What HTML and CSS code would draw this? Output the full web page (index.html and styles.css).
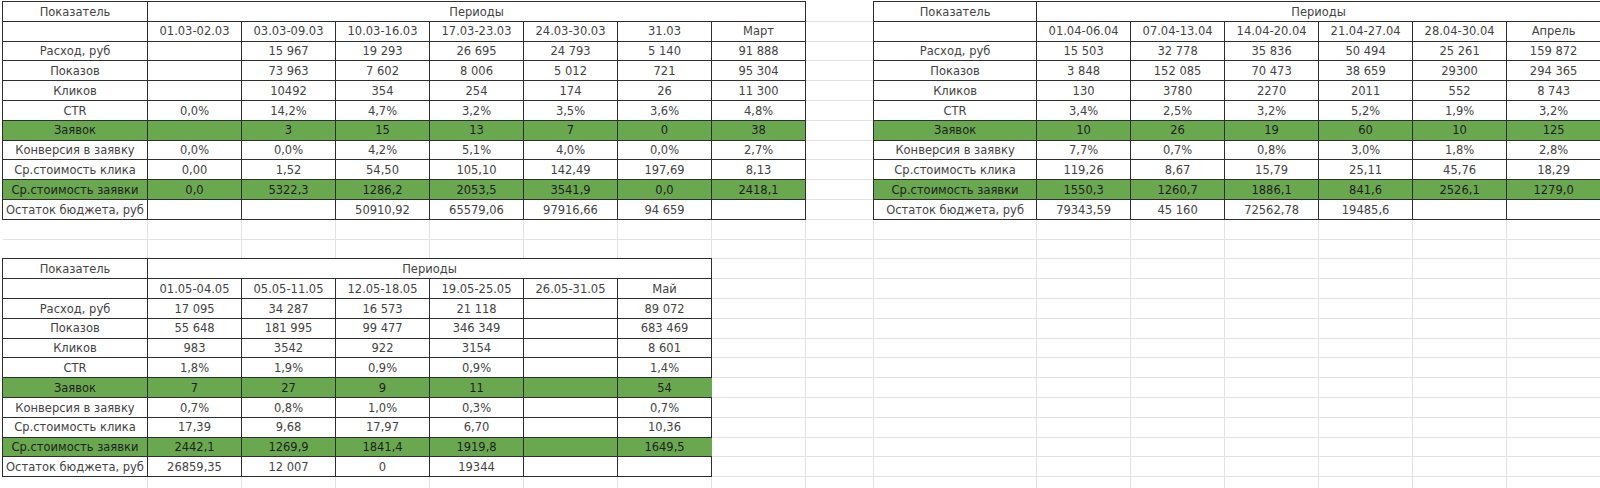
FILE: index.html
```html
<!DOCTYPE html>
<html lang="ru">
<head>
<meta charset="utf-8">
<title>Отчёт по периодам</title>
<link rel="stylesheet" href="styles.css">
</head>
<body>
<table class="sheet">
<colgroup>
<col class="wa"><col class="wd"><col class="wd"><col class="wd"><col class="wd"><col class="wd"><col class="wd"><col class="wd">
<col class="wi">
<col class="wj"><col class="wd"><col class="wd"><col class="wd"><col class="wd"><col class="wd"><col class="wd">
</colgroup>
<tbody>
<tr>
<td class="t">Показатель</td><td class="t" colspan="7">Периоды</td>
<td></td>
<td class="t">Показатель</td><td class="t" colspan="6">Периоды</td>
</tr>
<tr>
<td class="t"></td><td class="t">01.03-02.03</td><td class="t">03.03-09.03</td><td class="t">10.03-16.03</td><td class="t">17.03-23.03</td><td class="t">24.03-30.03</td><td class="t">31.03</td><td class="t">Март</td>
<td></td>
<td class="t"></td><td class="t">01.04-06.04</td><td class="t">07.04-13.04</td><td class="t">14.04-20.04</td><td class="t">21.04-27.04</td><td class="t">28.04-30.04</td><td class="t">Апрель</td>
</tr>
<tr>
<td class="t">Расход, руб</td><td class="t"></td><td class="t">15 967</td><td class="t">19 293</td><td class="t">26 695</td><td class="t">24 793</td><td class="t">5 140</td><td class="t">91 888</td>
<td></td>
<td class="t">Расход, руб</td><td class="t">15 503</td><td class="t">32 778</td><td class="t">35 836</td><td class="t">50 494</td><td class="t">25 261</td><td class="t">159 872</td>
</tr>
<tr>
<td class="t">Показов</td><td class="t"></td><td class="t">73 963</td><td class="t">7 602</td><td class="t">8 006</td><td class="t">5 012</td><td class="t">721</td><td class="t">95 304</td>
<td></td>
<td class="t">Показов</td><td class="t">3 848</td><td class="t">152 085</td><td class="t">70 473</td><td class="t">38 659</td><td class="t">29300</td><td class="t">294 365</td>
</tr>
<tr>
<td class="t">Кликов</td><td class="t"></td><td class="t">10492</td><td class="t">354</td><td class="t">254</td><td class="t">174</td><td class="t">26</td><td class="t">11 300</td>
<td></td>
<td class="t">Кликов</td><td class="t">130</td><td class="t">3780</td><td class="t">2270</td><td class="t">2011</td><td class="t">552</td><td class="t">8 743</td>
</tr>
<tr>
<td class="t">CTR</td><td class="t">0,0%</td><td class="t">14,2%</td><td class="t">4,7%</td><td class="t">3,2%</td><td class="t">3,5%</td><td class="t">3,6%</td><td class="t">4,8%</td>
<td></td>
<td class="t">CTR</td><td class="t">3,4%</td><td class="t">2,5%</td><td class="t">3,2%</td><td class="t">5,2%</td><td class="t">1,9%</td><td class="t">3,2%</td>
</tr>
<tr>
<td class="t g">Заявок</td><td class="t g"></td><td class="t g">3</td><td class="t g">15</td><td class="t g">13</td><td class="t g">7</td><td class="t g">0</td><td class="t g">38</td>
<td></td>
<td class="t g">Заявок</td><td class="t g">10</td><td class="t g">26</td><td class="t g">19</td><td class="t g">60</td><td class="t g">10</td><td class="t g">125</td>
</tr>
<tr>
<td class="t">Конверсия в заявку</td><td class="t">0,0%</td><td class="t">0,0%</td><td class="t">4,2%</td><td class="t">5,1%</td><td class="t">4,0%</td><td class="t">0,0%</td><td class="t">2,7%</td>
<td></td>
<td class="t">Конверсия в заявку</td><td class="t">7,7%</td><td class="t">0,7%</td><td class="t">0,8%</td><td class="t">3,0%</td><td class="t">1,8%</td><td class="t">2,8%</td>
</tr>
<tr>
<td class="t">Ср.стоимость клика</td><td class="t">0,00</td><td class="t">1,52</td><td class="t">54,50</td><td class="t">105,10</td><td class="t">142,49</td><td class="t">197,69</td><td class="t">8,13</td>
<td></td>
<td class="t">Ср.стоимость клика</td><td class="t">119,26</td><td class="t">8,67</td><td class="t">15,79</td><td class="t">25,11</td><td class="t">45,76</td><td class="t">18,29</td>
</tr>
<tr>
<td class="t g">Ср.стоимость заявки</td><td class="t g">0,0</td><td class="t g">5322,3</td><td class="t g">1286,2</td><td class="t g">2053,5</td><td class="t g">3541,9</td><td class="t g">0,0</td><td class="t g">2418,1</td>
<td></td>
<td class="t g">Ср.стоимость заявки</td><td class="t g">1550,3</td><td class="t g">1260,7</td><td class="t g">1886,1</td><td class="t g">841,6</td><td class="t g">2526,1</td><td class="t g">1279,0</td>
</tr>
<tr>
<td class="t">Остаток бюджета, руб</td><td class="t"></td><td class="t"></td><td class="t">50910,92</td><td class="t">65579,06</td><td class="t">97916,66</td><td class="t">94 659</td><td class="t"></td>
<td></td>
<td class="t">Остаток бюджета, руб</td><td class="t">79343,59</td><td class="t">45 160</td><td class="t">72562,78</td><td class="t">19485,6</td><td class="t"></td><td class="t"></td>
</tr>
<tr>
<td></td><td></td><td></td><td></td><td></td><td></td><td></td><td></td><td></td><td></td><td></td><td></td><td></td><td></td><td></td><td></td>
</tr>
<tr>
<td></td><td></td><td></td><td></td><td></td><td></td><td></td><td></td><td></td><td></td><td></td><td></td><td></td><td></td><td></td><td></td>
</tr>
<tr>
<td class="t">Показатель</td><td class="t" colspan="6">Периоды</td>
<td></td><td></td><td></td><td></td><td></td><td></td><td></td><td></td><td></td>
</tr>
<tr>
<td class="t"></td><td class="t">01.05-04.05</td><td class="t">05.05-11.05</td><td class="t">12.05-18.05</td><td class="t">19.05-25.05</td><td class="t">26.05-31.05</td><td class="t">Май</td>
<td></td><td></td><td></td><td></td><td></td><td></td><td></td><td></td><td></td>
</tr>
<tr>
<td class="t">Расход, руб</td><td class="t">17 095</td><td class="t">34 287</td><td class="t">16 573</td><td class="t">21 118</td><td class="t"></td><td class="t">89 072</td>
<td></td><td></td><td></td><td></td><td></td><td></td><td></td><td></td><td></td>
</tr>
<tr>
<td class="t">Показов</td><td class="t">55 648</td><td class="t">181 995</td><td class="t">99 477</td><td class="t">346 349</td><td class="t"></td><td class="t">683 469</td>
<td></td><td></td><td></td><td></td><td></td><td></td><td></td><td></td><td></td>
</tr>
<tr>
<td class="t">Кликов</td><td class="t">983</td><td class="t">3542</td><td class="t">922</td><td class="t">3154</td><td class="t"></td><td class="t">8 601</td>
<td></td><td></td><td></td><td></td><td></td><td></td><td></td><td></td><td></td>
</tr>
<tr>
<td class="t">CTR</td><td class="t">1,8%</td><td class="t">1,9%</td><td class="t">0,9%</td><td class="t">0,9%</td><td class="t"></td><td class="t">1,4%</td>
<td></td><td></td><td></td><td></td><td></td><td></td><td></td><td></td><td></td>
</tr>
<tr>
<td class="t g">Заявок</td><td class="t g">7</td><td class="t g">27</td><td class="t g">9</td><td class="t g">11</td><td class="t g"></td><td class="t g ge">54</td>
<td></td><td></td><td></td><td></td><td></td><td></td><td></td><td></td><td></td>
</tr>
<tr>
<td class="t">Конверсия в заявку</td><td class="t">0,7%</td><td class="t">0,8%</td><td class="t">1,0%</td><td class="t">0,3%</td><td class="t"></td><td class="t">0,7%</td>
<td></td><td></td><td></td><td></td><td></td><td></td><td></td><td></td><td></td>
</tr>
<tr>
<td class="t">Ср.стоимость клика</td><td class="t">17,39</td><td class="t">9,68</td><td class="t">17,97</td><td class="t">6,70</td><td class="t"></td><td class="t">10,36</td>
<td></td><td></td><td></td><td></td><td></td><td></td><td></td><td></td><td></td>
</tr>
<tr>
<td class="t g">Ср.стоимость заявки</td><td class="t g">2442,1</td><td class="t g">1269,9</td><td class="t g">1841,4</td><td class="t g">1919,8</td><td class="t g"></td><td class="t g ge">1649,5</td>
<td></td><td></td><td></td><td></td><td></td><td></td><td></td><td></td><td></td>
</tr>
<tr>
<td class="t">Остаток бюджета, руб</td><td class="t">26859,35</td><td class="t">12 007</td><td class="t">0</td><td class="t">19344</td><td class="t"></td><td class="t"></td>
<td></td><td></td><td></td><td></td><td></td><td></td><td></td><td></td><td></td>
</tr>
<tr>
<td></td><td></td><td></td><td></td><td></td><td></td><td></td><td></td><td></td><td></td><td></td><td></td><td></td><td></td><td></td><td></td>
</tr>
</tbody>
</table>
</body>
</html>
```

FILE: styles.css
```css
html, body {
  margin: 0;
  padding: 0;
  background: #ffffff;
}

body {
  font-family: "DejaVu Sans", "Liberation Sans", sans-serif;
  font-size: 11.5px;
  color: #434343;
  overflow: hidden;
}

.sheet {
  border-collapse: collapse;
  table-layout: fixed;
  width: 1598px;
  margin: 1px 0 0 2px;
}

.sheet col {
  border-right: 1px solid #e2e2e2;
}

.wa { width: 145px; }
.wd { width: 94px; }
.wi { width: 68px; }
.wj { width: 163px; }

.sheet tr {
  height: 19.8px;
  border-bottom: 1px solid #e2e2e2;
}

.sheet td {
  padding: 2px 2px 0;
  text-align: center;
  vertical-align: middle;
  white-space: nowrap;
  overflow: hidden;
  line-height: 1;
}

.t {
  border: 1px solid #2e2e2e;
}

.g {
  background: #6aa84f;
  color: #1e1e1e;
}

.ge {
  border-right-color: #6aa84f;
}
```
